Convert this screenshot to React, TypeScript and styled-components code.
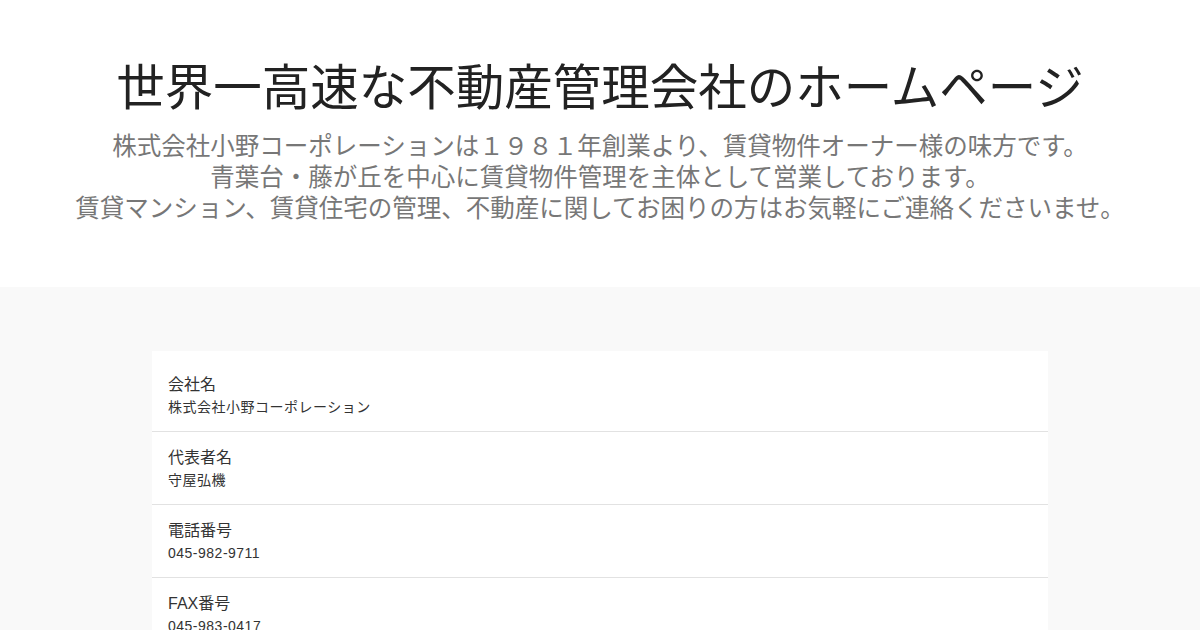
import React from "react";
import styled, { createGlobalStyle } from "styled-components";

const GlobalStyle = createGlobalStyle`
  body {
    margin: 0;
    background: #f9f9f9;
    font-family: "Liberation Sans", "Noto Sans CJK JP", sans-serif;
    color: #333;
  }
`;

const Hero = styled.header`
  background: #ffffff;
  padding: 58px 0 63px;
  text-align: center;
`;

const Title = styled.h1`
  margin: 0;
  font-size: 48.5px;
  font-weight: 400;
  line-height: 60px;
  color: #222;
`;

const Lead = styled.p`
  margin: 13px 0 0;
  font-size: 24.5px;
  line-height: 31px;
  color: #777;
`;

const Main = styled.main`
  padding: 64px 0 40px;
`;

const Card = styled.section`
  width: 896px;
  margin: 0 auto;
  background: #ffffff;
  padding-top: 8px;
`;

const Row = styled.div`
  padding: 15px 16px 13px;
  border-bottom: 1px solid #e2e2e2;
`;

const Label = styled.div`
  font-size: 16px;
  line-height: 22px;
  color: #333;
`;

const Value = styled.div`
  font-size: 14px;
  line-height: 22px;
  color: #333;
  letter-spacing: 0.5px;
`;

const info = [
  { label: "会社名", value: "株式会社小野コーポレーション" },
  { label: "代表者名", value: "守屋弘機" },
  { label: "電話番号", value: "045-982-9711" },
  { label: "FAX番号", value: "045-983-0417" },
];

export default function App() {
  return (
    <>
      <GlobalStyle />
      <Hero>
        <Title>世界一高速な不動産管理会社のホームページ</Title>
        <Lead>
          株式会社小野コーポレーションは１９８１年創業より、賃貸物件オーナー様の味方です。
          <br />
          青葉台・藤が丘を中心に賃貸物件管理を主体として営業しております。
          <br />
          賃貸マンション、賃貸住宅の管理、不動産に関してお困りの方はお気軽にご連絡くださいませ。
        </Lead>
      </Hero>
      <Main>
        <Card>
          {info.map((item) => (
            <Row key={item.label}>
              <Label>{item.label}</Label>
              <Value>{item.value}</Value>
            </Row>
          ))}
        </Card>
      </Main>
    </>
  );
}
